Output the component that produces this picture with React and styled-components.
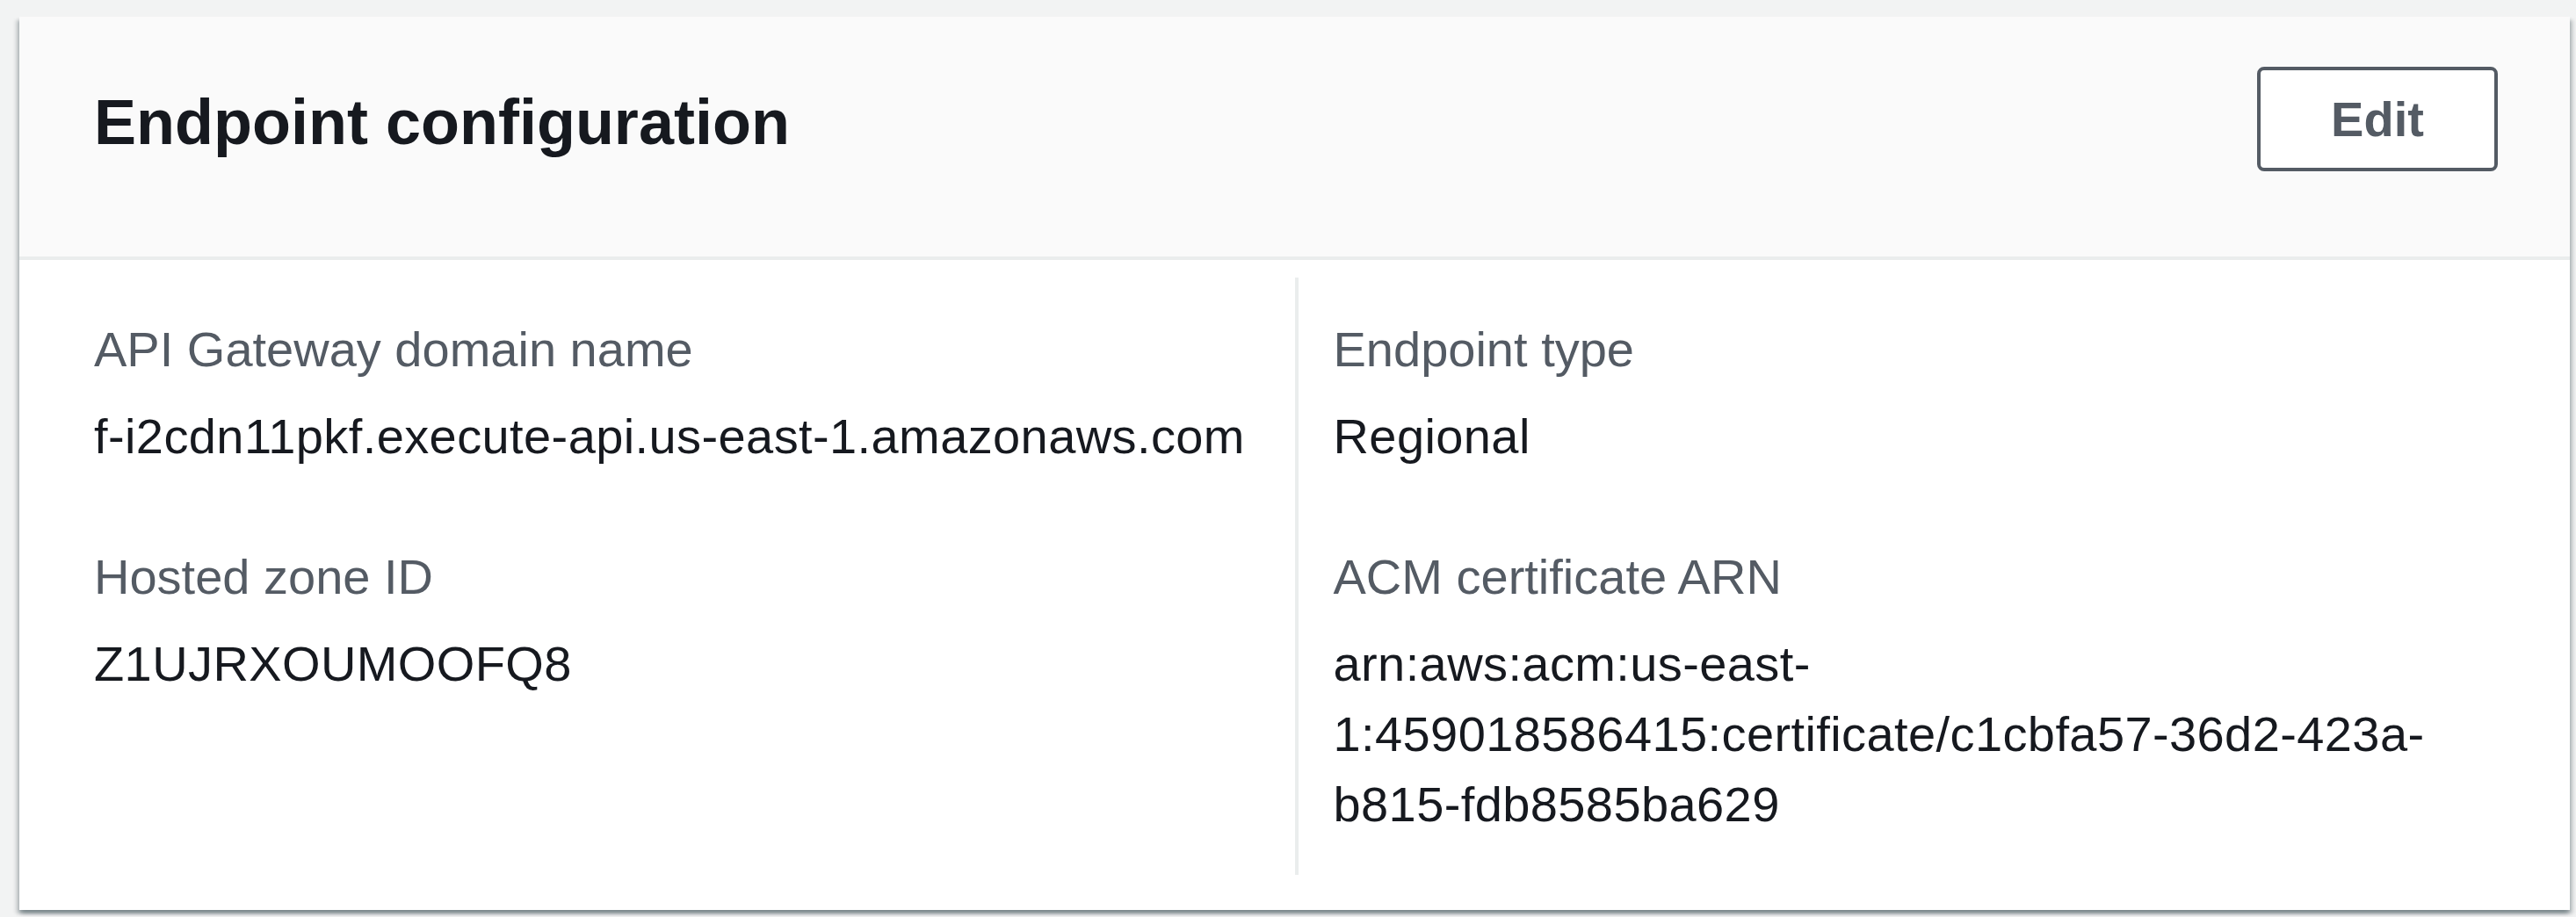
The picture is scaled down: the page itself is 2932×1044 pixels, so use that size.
import React from 'react';
import styled, { createGlobalStyle } from 'styled-components';

const GlobalStyle = createGlobalStyle`
  html, body {
    margin: 0;
    padding: 0;
    background: #f2f3f3;
  }
  body {
    font-family: "Liberation Sans", Arial, sans-serif;
    color: #16191f;
  }
`;

const Page = styled.div`
  padding: 19px 7px 8px 22px;
`;

const Card = styled.section`
  background: #ffffff;
  box-shadow: 0 4px 4px 0 rgba(0, 28, 36, 0.3),
    4px 4px 4px 0 rgba(0, 28, 36, 0.15),
    -4px 4px 4px 0 rgba(0, 28, 36, 0.15);
`;

const Header = styled.header`
  display: flex;
  justify-content: space-between;
  align-items: flex-start;
  background: #fafafa;
  padding: 57px 82px 97px 85px;
  border-bottom: 4px solid #eaeded;
`;

const Title = styled.h2`
  margin: 19px 0 0 0;
  font-size: 72px;
  line-height: 88px;
  font-weight: 700;
  color: #16191f;
`;

const EditButton = styled.button`
  display: flex;
  align-items: center;
  justify-content: center;
  height: 119px;
  width: 274px;
  padding: 0;
  background: #ffffff;
  border: 4.5px solid #545b64;
  border-radius: 8px;
  font-family: inherit;
  font-size: 56px;
  font-weight: 700;
  color: #545b64;
  cursor: pointer;
`;

const Body = styled.div`
  display: grid;
  grid-template-columns: 1fr 1fr;
  padding: 20px 85px 40px 85px;
`;

const Column = styled.div`
  display: flex;
  flex-direction: column;
  gap: 80px;
  padding: 42px ${(p) => (p.$divided ? '0' : '40px')} 40px ${(p) => (p.$divided ? '40px' : '0')};
  border-left: ${(p) => (p.$divided ? '4px solid #eaeded' : 'none')};
`;

const Field = styled.div`
  display: flex;
  flex-direction: column;
  gap: 19px;
  font-size: 56px;
  line-height: 80px;
`;

const Label = styled.div`
  color: #545b64;
`;

const Value = styled.div`
  color: #16191f;
  letter-spacing: 0.4px;
  overflow-wrap: break-word;
`;

const columns = [
  [
    { label: 'API Gateway domain name', value: 'f-i2cdn11pkf.execute-api.us-east-1.amazonaws.com' },
    { label: 'Hosted zone ID', value: 'Z1UJRXOUMOOFQ8' },
  ],
  [
    { label: 'Endpoint type', value: 'Regional' },
    {
      label: 'ACM certificate ARN',
      value: 'arn:aws:acm:us-east-1:459018586415:certificate/c1cbfa57-36d2-423a-b815-fdb8585ba629',
    },
  ],
];

export default function App() {
  return (
    <>
      <GlobalStyle />
      <Page>
        <Card>
          <Header>
            <Title>Endpoint configuration</Title>
            <EditButton>Edit</EditButton>
          </Header>
          <Body>
            {columns.map((fields, i) => (
              <Column key={i} $divided={i > 0}>
                {fields.map((f) => (
                  <Field key={f.label}>
                    <Label>{f.label}</Label>
                    <Value>{f.value}</Value>
                  </Field>
                ))}
              </Column>
            ))}
          </Body>
        </Card>
      </Page>
    </>
  );
}
